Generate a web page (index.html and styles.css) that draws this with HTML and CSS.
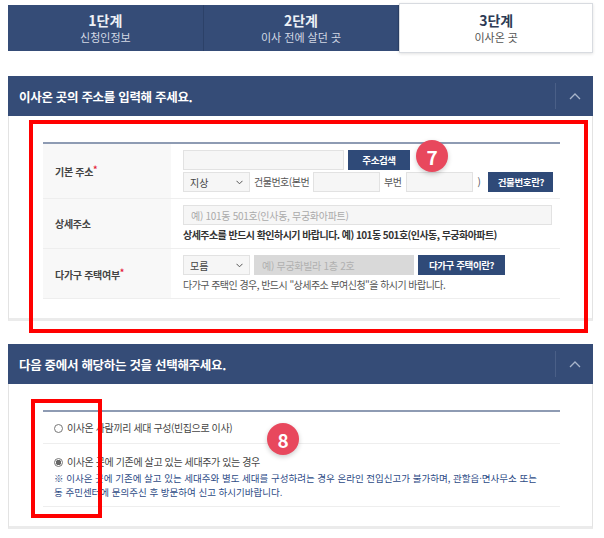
FILE: index.html
```html
<!DOCTYPE html>
<html lang="ko">

<head>
    <meta charset="UTF-8">
    <meta name="viewport" content="width=device-width, initial-scale=1.0">
    <title>전입신고 - 이사온 곳</title>
    <link rel="stylesheet" href="styles.css">
</head>

<body>

    <div class="wrap">
        <ul class="steps">
            <li class="step">
                <strong>1단계</strong>
                <span>신청인정보</span>
            </li>
            <li class="step">
                <strong>2단계</strong>
                <span>이사 전에 살던 곳</span>
            </li>
            <li class="step on">
                <strong>3단계</strong>
                <span>이사온 곳</span>
            </li>
        </ul>

        <!-- 주소 입력 -->
        <div class="panel panel-addr">
            <div class="panel-head">
                <h2>이사온 곳의 주소를 입력해 주세요.</h2>
                <button class="fold" type="button">
                    <svg width="12" height="8" viewBox="0 0 12 8"><path d="M1 7 L6 2 L11 7" fill="none" stroke="#a9b5ca" stroke-width="1.3"/></svg>
                </button>
            </div>
            <div class="panel-body">
                <table class="form-table">
                    <tr>
                        <th>기본 주소<em>*</em></th>
                        <td>
                            <div class="line">
                                <input type="text" class="inp inp-addr">
                                <button type="button" class="btn btn-search">주소검색</button>
                            </div>
                            <div class="line line-bldg">
                                <span class="sel">
                                    <select><option>지상</option></select>
                                    <svg width="7" height="5" viewBox="0 0 7 5"><path d="M0.5 0.8 L3.5 3.8 L6.5 0.8" fill="none" stroke="#555" stroke-width="1"/></svg>
                                </span>
                                <span class="txt">건물번호(본번</span>
                                <input type="text" class="inp inp-num">
                                <span class="txt">부번</span>
                                <input type="text" class="inp inp-num">
                                <span class="txt paren">)</span>
                                <button type="button" class="btn btn-bldg">건물번호란?</button>
                            </div>
                        </td>
                    </tr>
                    <tr>
                        <th>상세주소</th>
                        <td>
                            <div class="line">
                                <input type="text" class="inp inp-detail" placeholder="예) 101동 501호(인사동, 무궁화아파트)">
                            </div>
                            <p class="note-b">상세주소를 반드시 확인하시기 바랍니다. 예) 101동 501호(인사동, 무궁화아파트)</p>
                        </td>
                    </tr>
                    <tr>
                        <th>다가구 주택여부<em>*</em></th>
                        <td>
                            <div class="line">
                                <span class="sel">
                                    <select><option>모름</option></select>
                                    <svg width="7" height="5" viewBox="0 0 7 5"><path d="M0.5 0.8 L3.5 3.8 L6.5 0.8" fill="none" stroke="#555" stroke-width="1"/></svg>
                                </span>
                                <input type="text" class="inp inp-house" placeholder="예) 무궁화빌라 1층 2호" disabled>
                                <button type="button" class="btn btn-house">다가구 주택이란?</button>
                            </div>
                            <p class="note">다가구 주택인 경우, 반드시 "상세주소 부여신청"을 하시기 바랍니다.</p>
                        </td>
                    </tr>
                </table>

                <div class="mark mark-addr"></div>
                <span class="badge badge-7">7</span>
            </div>
        </div>

        <!-- 세대 구성 선택 -->
        <div class="panel panel-house">
            <div class="panel-head">
                <h2>다음 중에서 해당하는 것을 선택해주세요.</h2>
                <button class="fold" type="button">
                    <svg width="12" height="8" viewBox="0 0 12 8"><path d="M1 7 L6 2 L11 7" fill="none" stroke="#a9b5ca" stroke-width="1.3"/></svg>
                </button>
            </div>
            <div class="panel-body">
                <ul class="choice">
                    <li>
                        <label><input type="radio" name="house"> 이사온 사람끼리 세대 구성(빈집으로 이사)</label>
                    </li>
                    <li>
                        <label><input type="radio" name="house" checked> 이사온 곳에 기존에 살고 있는 세대주가 있는 경우</label>
                        <p class="note-blue">※ 이사온 곳에 기존에 살고 있는 세대주와 별도 세대를 구성하려는 경우 온라인 전입신고가 불가하며, 관할읍·면사무소 또는<br>동 주민센터에 문의주신 후 방문하여 신고 하시기바랍니다.</p>
                    </li>
                </ul>

                <div class="mark mark-house"></div>
                <span class="badge badge-8">8</span>
            </div>
        </div>
    </div>

</body>

</html>
```

FILE: styles.css
```css
html {
    background-color: #fff;
    font-family: "Noto Sans CJK KR", "Noto Sans", sans-serif;
}

body {
    margin: 0;
    color: #333;
}

.wrap {
    width: 585px;
    margin-left: 8px;
    padding-top: 3px;
}

/* 단계 탭 */
.steps {
    display: flex;
    margin: 0;
    padding: 0;
    list-style: none;
    height: 50px;
}

.step {
    display: flex;
    flex-direction: column;
    align-items: center;
    justify-content: center;
    background-color: #354c77;
    color: #fff;
    margin: 2px 0;
    width: 195px;
    border-right: 1px solid #2c4168;
}

.step strong {
    font-size: 14px;
    line-height: 18px;
    font-weight: 700;
    color: #eef1f6;
}

.step span {
    font-size: 11px;
    line-height: 16px;
    color: #d3d9e5;
}

.step.on {
    margin: 0;
    width: 194px;
    background-color: #fff;
    border: 1px solid #d8dbe0;
    box-shadow: 0 1px 3px rgba(0, 0, 0, 0.12);
    box-sizing: border-box;
}

.step.on strong {
    color: #2d3a55;
}

.step.on span {
    color: #555;
}

/* 패널 */
.panel {
    margin-top: 23px;
}

.panel-head {
    display: flex;
    align-items: center;
    height: 40px;
    background-color: #354c77;
    padding-left: 11px;
}

.panel-head h2 {
    flex: 1;
    margin: 0;
    font-size: 12.5px;
    font-weight: 700;
    color: #fff;
    letter-spacing: -0.3px;
}

.fold {
    width: 38px;
    height: 26px;
    border: 0;
    border-left: 1px solid #4a5f87;
    background: none;
    padding: 0;
    display: flex;
    align-items: center;
    justify-content: center;
}

.panel-body {
    position: relative;
    border: 1px solid #e3e3e3;
    border-top: 0;
    border-bottom: 3px solid #ebebeb;
    padding: 26px 32px 19px 34px;
}

/* 입력 표 */
.form-table {
    width: 100%;
    border-collapse: collapse;
    border-top: 2px solid #8e9bb3;
}

.form-table tr {
    border-bottom: 1px solid #eee;
}

.form-table th {
    width: 115px;
    text-align: left;
    font-size: 10px;
    font-weight: 700;
    color: #444;
    background-color: #f8f8f8;
    padding-left: 12px;
    letter-spacing: -0.3px;
}

.form-table th em {
    font-style: normal;
    color: #e5223a;
    vertical-align: 3px;
    font-size: 9px;
}

.form-table td {
    padding: 6px 0 6px 12px;
}

.line {
    display: flex;
    align-items: center;
    gap: 4px;
    font-size: 10px;
    line-height: 14px;
    white-space: nowrap;
    letter-spacing: -0.5px;
}

.line + .line {
    margin-top: 2px;
}

.line > * {
    flex-shrink: 0;
}

.line-bldg {
    gap: 3px;
}

.inp {
    height: 20px;
    box-sizing: border-box;
    border: 1px solid #e2e2e2;
    background-color: #f6f6f6;
    padding: 0 7px;
    font-family: inherit;
    font-size: 10px;
    letter-spacing: -0.3px;
    color: #333;
}

.inp::placeholder {
    color: #aaa;
}

.inp-addr {
    width: 161px;
}

.inp-num {
    width: 67px;
}

.inp-detail {
    width: 369px;
}

.inp-house {
    width: 160px;
    background-color: #d9d9d9;
    border-color: #d9d9d9;
}

.inp-house::placeholder {
    color: #b0b0b0;
}

.txt {
    color: #555;
    margin: 0 1px;
}

.paren {
    margin: 0 5px 0 2px;
}

.sel {
    position: relative;
    display: inline-flex;
}

.sel select {
    appearance: none;
    width: 67px;
    height: 20px;
    border: 1px solid #e2e2e2;
    background-color: #f6f6f6;
    font-family: inherit;
    font-size: 10px;
    color: #444;
    padding: 0 6px;
}

.sel svg {
    position: absolute;
    right: 7px;
    top: 8px;
}

.btn {
    height: 20px;
    border: 0;
    background-color: #2f4a78;
    color: #fff;
    font-family: inherit;
    font-size: 9.5px;
    font-weight: 700;
    letter-spacing: -0.4px;
    padding: 0;
}

.btn-search {
    width: 62px;
}

.btn-bldg {
    width: 65px;
}

.btn-house {
    width: 87px;
}

.note,
.note-b {
    margin: 3px 0 0;
    font-size: 10px;
    line-height: 14px;
    color: #555;
    letter-spacing: -0.55px;
    white-space: nowrap;
}

.note-b {
    font-weight: 700;
    color: #333;
}

/* 선택 목록 */
.choice {
    list-style: none;
    margin: 0;
    padding: 0;
    border-top: 2px solid #8e9bb3;
}

.choice li {
    border-bottom: 1px solid #eee;
    padding: 8px 0 7px 11px;
    font-size: 10px;
    color: #444;
}

.choice li + li {
    padding: 10px 0 7px 11px;
}

.choice label {
    display: flex;
    align-items: center;
    gap: 4px;
    line-height: 16px;
    letter-spacing: -0.4px;
}

.choice input {
    appearance: none;
    width: 9px;
    height: 9px;
    margin: 0;
    border: 1px solid #777;
    border-radius: 50%;
    background-color: #fff;
}

.choice input:checked {
    background: radial-gradient(circle, #666 0 2.5px, #fff 3px);
}

.note-blue {
    margin: 1px 0 0;
    font-size: 9.5px;
    line-height: 14px;
    color: #2d4b86;
    white-space: nowrap;
}

/* 강조 표시 */
.mark {
    position: absolute;
    border: 4px solid #ff0000;
    pointer-events: none;
}

.mark-addr {
    left: 20px;
    top: 4px;
    width: 551px;
    height: 205px;
}

.mark-house {
    left: 22px;
    top: 15px;
    width: 63px;
    height: 111px;
}

.badge {
    position: absolute;
    width: 32px;
    height: 32px;
    border-radius: 50%;
    background-color: #e8485d;
    color: #fff;
    font-size: 19px;
    font-weight: 700;
    display: flex;
    align-items: center;
    justify-content: center;
    box-shadow: 0 2px 5px rgba(0, 0, 0, 0.2);
}

.badge-7 {
    left: 407px;
    top: 24px;
}

.badge-8 {
    left: 258px;
    top: 39px;
}
```
